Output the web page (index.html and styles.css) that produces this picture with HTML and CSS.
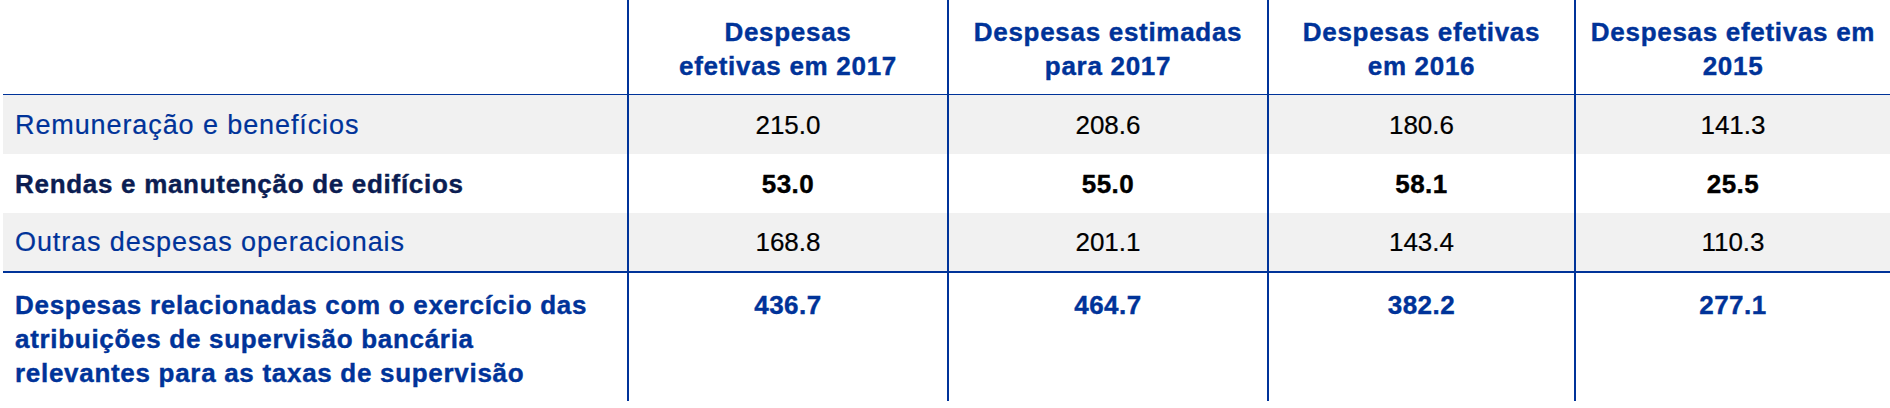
FILE: index.html
```html
<!DOCTYPE html>
<html lang="pt">
  <head>
    <meta charset="UTF-8" />
    <meta name="viewport" content="width=device-width, initial-scale=1.0" />
    <title>Despesas de supervisão bancária</title>
    <link rel="stylesheet" href="styles.css">
  </head>
  <body>
    <table class="costs">
      <colgroup>
        <col class="col-label">
        <col class="col-a">
        <col class="col-b">
        <col class="col-c">
        <col class="col-d">
      </colgroup>
      <thead>
        <tr>
          <th></th>
          <th>Despesas<br>efetivas em 2017</th>
          <th>Despesas estimadas<br>para 2017</th>
          <th>Despesas efetivas<br>em 2016</th>
          <th>Despesas efetivas em<br>2015</th>
        </tr>
      </thead>
      <tbody>
        <tr class="shade">
          <td class="label">Remuneração e benefícios</td>
          <td>215.0</td>
          <td>208.6</td>
          <td>180.6</td>
          <td>141.3</td>
        </tr>
        <tr class="strong">
          <td class="label">Rendas e manutenção de edifícios</td>
          <td>53.0</td>
          <td>55.0</td>
          <td>58.1</td>
          <td>25.5</td>
        </tr>
        <tr class="shade last">
          <td class="label">Outras despesas operacionais</td>
          <td>168.8</td>
          <td>201.1</td>
          <td>143.4</td>
          <td>110.3</td>
        </tr>
      </tbody>
      <tfoot>
        <tr class="total">
          <td class="label">Despesas relacionadas com o exercício das<br>atribuições de supervisão bancária<br>relevantes para as taxas de supervisão</td>
          <td>436.7</td>
          <td>464.7</td>
          <td>382.2</td>
          <td>277.1</td>
        </tr>
      </tfoot>
    </table>
  </body>
</html>
```

FILE: styles.css
```css
* {
  margin: 0;
  padding: 0;
  box-sizing: border-box;
}
body {
  background: #fff;
  font-family: 'Liberation Sans', Arial, Helvetica, sans-serif;
  font-size: 26px;
  color: #000;
}
.costs {
  margin-left: 3px;
  width: 1887px;
  table-layout: fixed;
  border-collapse: separate;
  border-spacing: 0;
  line-height: 34px;
  -webkit-text-stroke: 0.2px;
}
.col-label { width: 624px; }
.col-a { width: 320px; }
.col-b { width: 320px; }
.col-c { width: 307px; }
.col-d { width: 316px; }

.costs th,
.costs td {
  text-align: center;
  vertical-align: middle;
}
.costs th + th,
.costs td + td {
  border-left: 2px solid #003399;
}
.costs thead tr {
  height: 95px;
}
.costs th {
  padding-top: 4px;
  border-bottom: 1px solid #003399;
  color: #003399;
  font-weight: bold;
  letter-spacing: 0.7px;
  -webkit-text-stroke: 0.4px;
}
.costs tbody tr {
  height: 59px;
}
.costs tbody tr.last {
  height: 60px;
}
.costs tbody tr.last td {
  border-bottom: 2px solid #003399;
}
.shade td {
  background: #f1f1f1;
}
.costs td.label {
  text-align: left;
  padding-left: 12px;
  color: #003399;
  font-size: 27px;
  letter-spacing: 0.9px;
}
.strong td {
  font-weight: bold;
  letter-spacing: 0.5px;
  -webkit-text-stroke: 0.4px;
}
.costs .strong td.label {
  color: #0b1d52;
  font-size: 26px;
  letter-spacing: 0.7px;
}
.total td {
  height: 128px;
  vertical-align: top;
  padding-top: 15px;
  font-weight: bold;
  color: #003399;
  letter-spacing: 0.5px;
  -webkit-text-stroke: 0.4px;
}
.costs .total td.label {
  font-size: 26px;
  letter-spacing: 0.7px;
}
```
